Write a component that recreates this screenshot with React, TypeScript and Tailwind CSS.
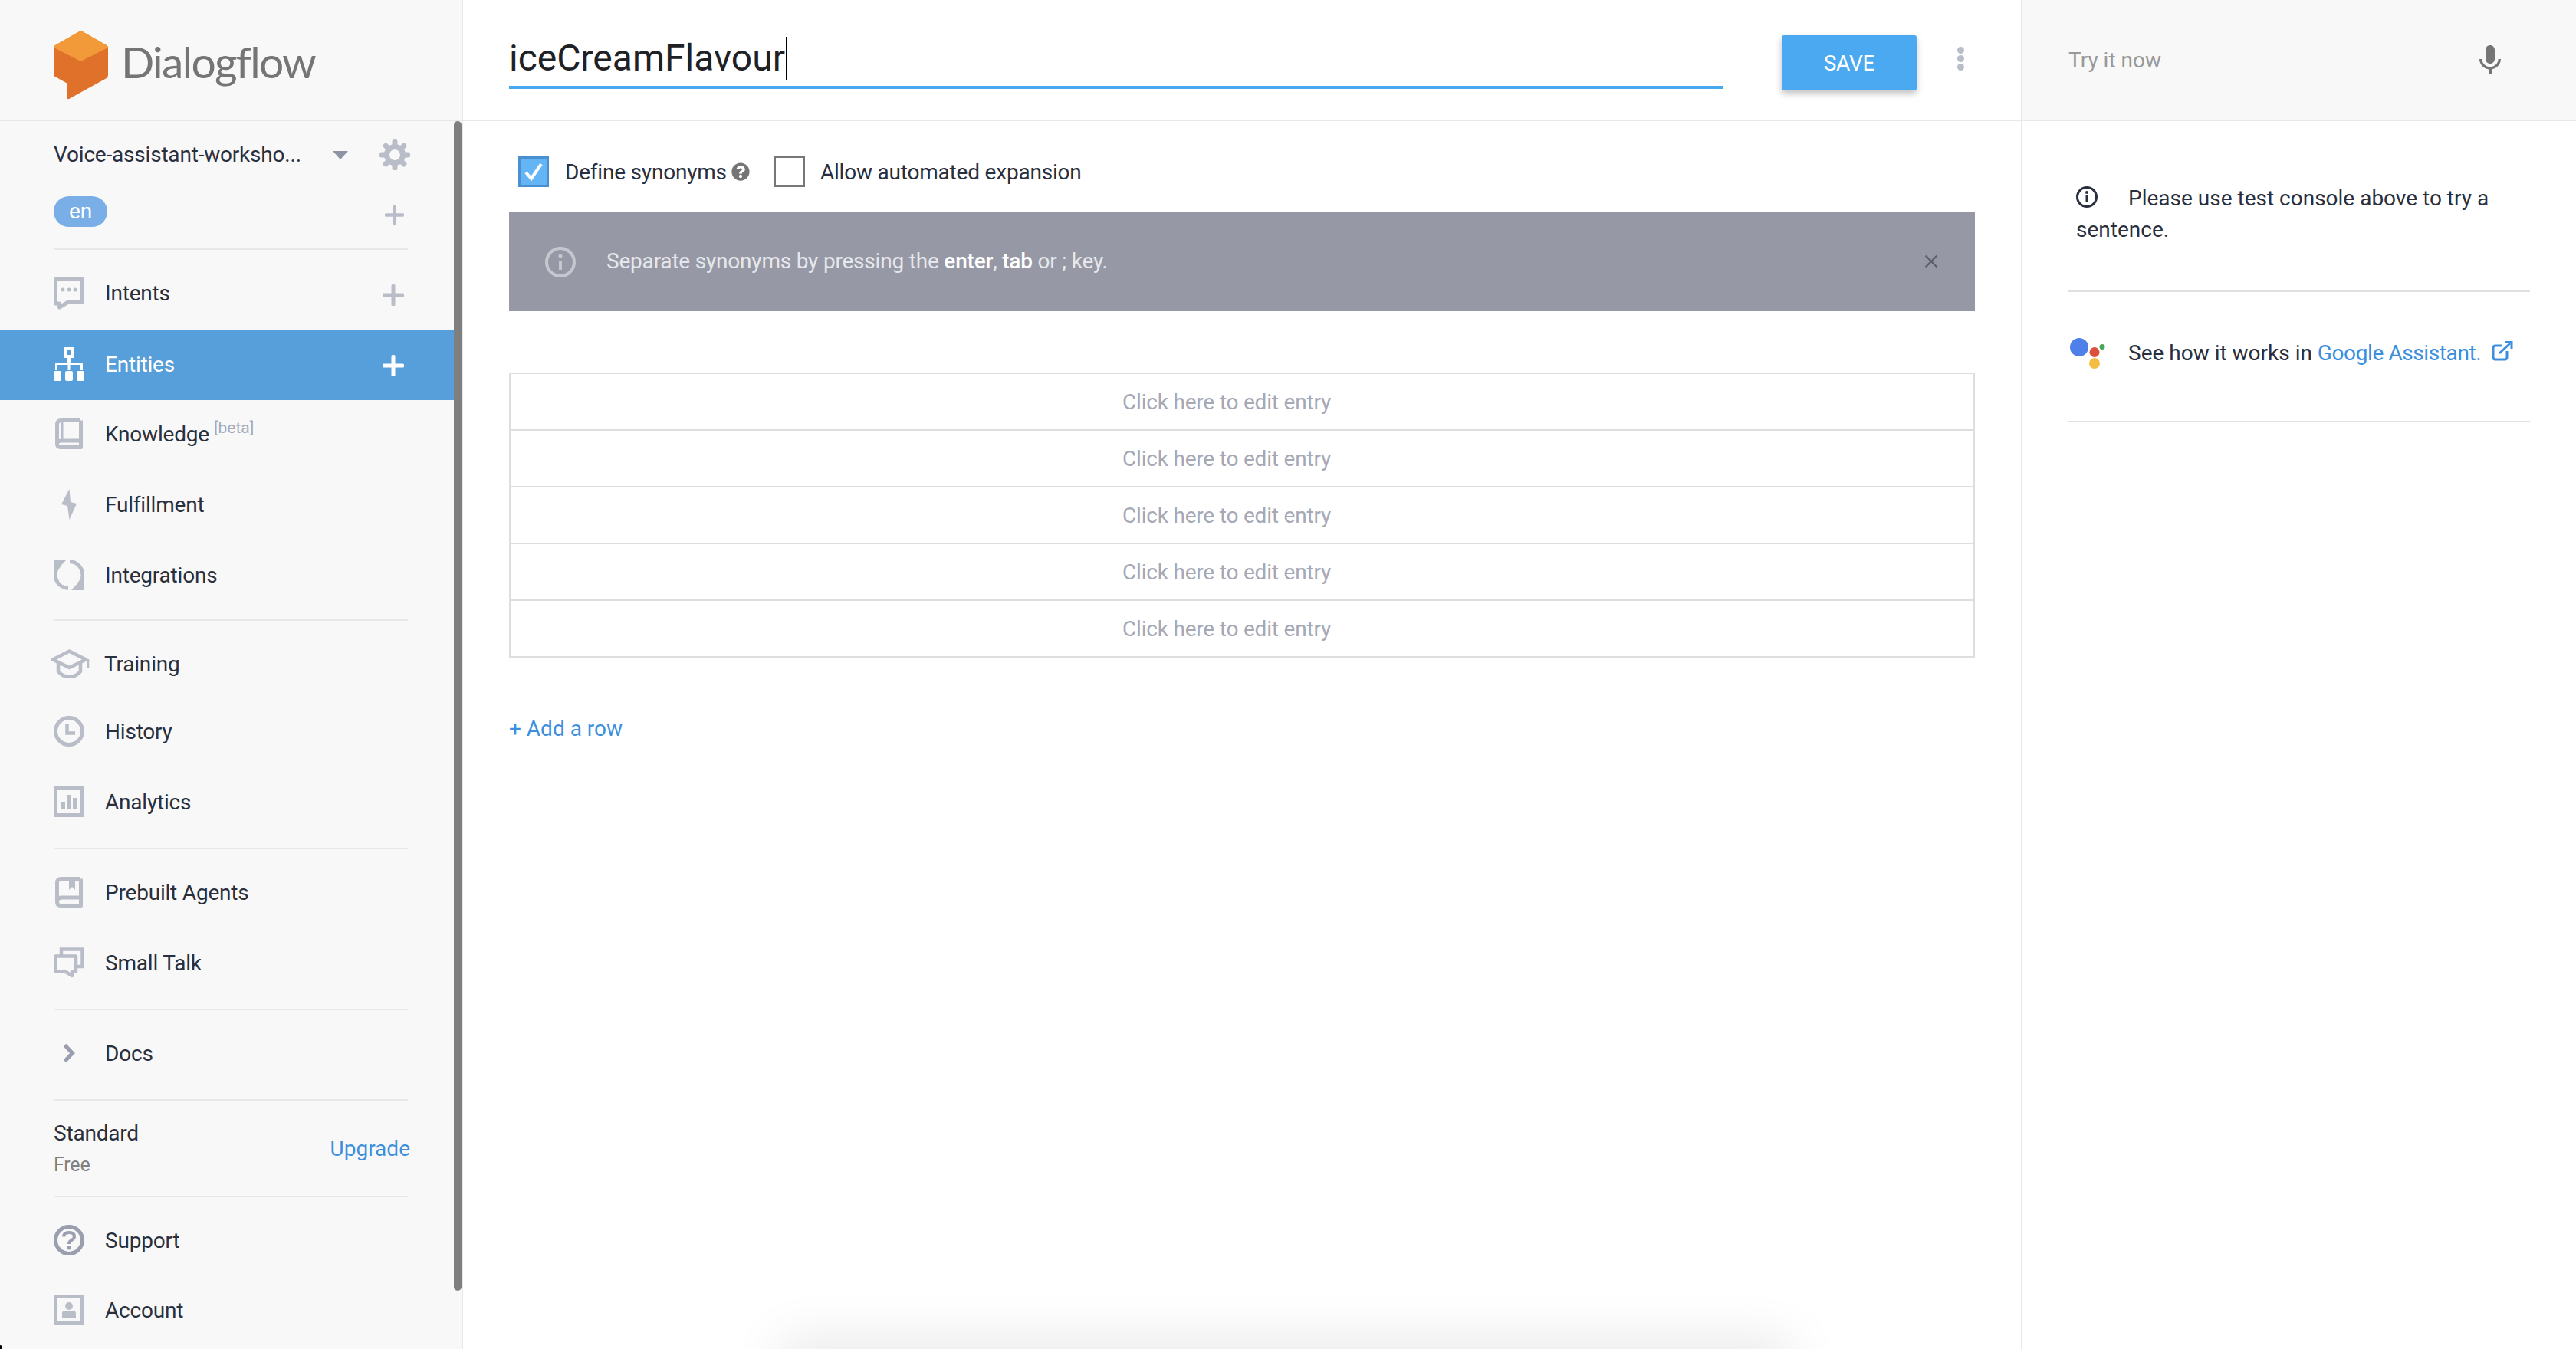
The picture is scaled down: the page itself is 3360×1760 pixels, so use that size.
import { MdClose, MdMic } from 'react-icons/md';
import { FaQuestionCircle } from 'react-icons/fa';

const ICON = '#b9bdc7';

function Plus({ size, color = ICON }: { size: number; color?: string }) {
  return (
    <svg width={size} height={size} viewBox="0 0 28 28" fill={color}>
      <rect x="11.5" y="0" width="5" height="28" rx="1.5" />
      <rect x="0" y="11.5" width="28" height="5" rx="1.5" />
    </svg>
  );
}

function Gear() {
  const teeth = [0, 45, 90, 135, 180, 225, 270, 315];
  return (
    <svg width="40" height="40" viewBox="0 0 40 40" className="shrink-0">
      {teeth.map((a) => (
        <rect key={a} x="16.5" y="0" width="7" height="10" rx="2.5" fill={ICON} transform={`rotate(${a} 20 20)`} />
      ))}
      <circle cx="20" cy="20" r="10.5" fill="none" stroke={ICON} strokeWidth="7" />
    </svg>
  );
}

function Logo() {
  return (
    <svg width="71" height="90" viewBox="0 0 71 90" className="shrink-0">
      <path d="M35.5 0 L69 19 Q71 20 71 23 L71 58 Q71 61 69 62 L20 89 Q18 90 18 88 L18 69 L2 60 Q0 59 0 56 L0 23 Q0 20 2 19 Z" fill="#e0712a" />
      <path d="M33.5 1 Q35.5 0 37.5 1 L69 19 Q71 20 71 22 L35.5 40 L0 22 Q0 20 2 19 Z" fill="#f29a39" />
    </svg>
  );
}

const NAV_ICONS: Record<string, React.ReactNode> = {
  intents: (
    <svg width="40" height="44" viewBox="0 0 40 44" fill="none" stroke={ICON} strokeWidth="5" className="shrink-0 mt-[4px]">
      <path d="M2.5 2.5 H37.5 V32 H19 L7.5 39 V34 H2.5 Z" strokeLinejoin="round" />
      <circle cx="12" cy="16" r="2.5" fill={ICON} stroke="none" />
      <circle cx="20" cy="16" r="2.5" fill={ICON} stroke="none" />
      <circle cx="28" cy="16" r="2.5" fill={ICON} stroke="none" />
    </svg>
  ),
  entities: (
    <svg width="40" height="44" viewBox="0 0 40 44" fill="#fff" className="shrink-0">
      <path fillRule="evenodd" d="M13 1 Q13 0 14 0 H26 Q27 0 27 1 V13 Q27 14 26 14 H23 V20 H36 Q38 20 38 22 V30 H35 V23 H21.5 V30 H18.5 V23 H5 V30 H2 V22 Q2 20 4 20 H17 V14 H14 Q13 14 13 13 Z M17 4 V10 H23 V4 Z" />
      <rect x="0" y="31" width="10" height="13" rx="2" />
      <rect x="15" y="31" width="10" height="13" rx="2" />
      <rect x="30" y="31" width="10" height="13" rx="2" />
    </svg>
  ),
  knowledge: (
    <svg width="36" height="40" viewBox="0 0 36 40" fill="none" stroke={ICON} strokeWidth="5" className="shrink-0">
      <path d="M33 2.5 H8 Q2.5 2.5 2.5 8 V33 Q2.5 37.5 7 37.5 H33.5 V2.5 M33 29 H8 Q2.5 29 2.5 33" strokeLinejoin="round" />
      <path d="M9 3 V28" strokeWidth="3" />
    </svg>
  ),
  fulfillment: (
    <svg width="20" height="40" viewBox="0 0 20 40" fill={ICON} className="shrink-0">
      <path d="M10.5 0 L0 20 L8 22 L10.5 40 L20 19 L12 17 Z" />
    </svg>
  ),
  integrations: (
    <svg width="40" height="40" viewBox="0 0 40 40" fill="none" stroke={ICON} strokeWidth="5" className="shrink-0">
      <path d="M19 37.5 A17.5 17.5 0 0 1 7 8" />
      <path d="M21 2.5 A17.5 17.5 0 0 1 33 32" />
      <path d="M0 0 H17 L1 17 Z" fill={ICON} stroke="none" />
      <path d="M40 40 H23 L39 23 Z" fill={ICON} stroke="none" />
    </svg>
  ),
  training: (
    <svg width="53" height="38" viewBox="0 0 53 38" fill="none" stroke={ICON} strokeWidth="4.5" className="shrink-0">
      <path d="M26.5 2.5 L48 13.5 L26.5 24 L5 13.5 Z" strokeLinejoin="round" />
      <path d="M12 18 V29 Q18 36 26.5 36 Q35 36 41 29 V18" />
      <path d="M51 13 V25" strokeWidth="2.5" />
    </svg>
  ),
  history: (
    <svg width="40" height="40" viewBox="0 0 40 40" fill="none" stroke={ICON} strokeWidth="5" className="shrink-0">
      <circle cx="20" cy="20" r="17.5" />
      <path d="M17.5 11 V22.5 H28" strokeWidth="4.5" />
    </svg>
  ),
  analytics: (
    <svg width="40" height="40" viewBox="0 0 40 40" fill={ICON} className="shrink-0">
      <path fillRule="evenodd" d="M1 0 H39 Q40 0 40 1 V39 Q40 40 39 40 H1 Q0 40 0 39 V1 Q0 0 1 0 Z M5 5 V35 H35 V5 Z" />
      <rect x="10" y="20" width="5" height="10" />
      <rect x="17.5" y="11" width="5" height="19" />
      <rect x="25" y="15" width="5" height="15" />
    </svg>
  ),
  prebuilt: (
    <svg width="36" height="40" viewBox="0 0 36 40" fill="none" stroke={ICON} strokeWidth="5" className="shrink-0">
      <path d="M33 2.5 H8 Q2.5 2.5 2.5 8 V33 Q2.5 37.5 7 37.5 H33.5 V2.5 M33 27 H8 Q2.5 27 2.5 33" strokeLinejoin="round" />
      <path d="M18 3 H26 V17 L22 13 L18 17 Z" fill={ICON} stroke="none" />
    </svg>
  ),
  smalltalk: (
    <svg width="40" height="40" viewBox="0 0 40 40" fill="none" stroke={ICON} strokeWidth="4.5" className="shrink-0">
      <path d="M10 10 V2.5 H37.5 V25 H29" />
      <path d="M2.5 11.5 H29 V31.5 H24 V37 L15 31.5 H2.5 Z" strokeLinejoin="round" />
    </svg>
  ),
  docs: (
    <svg width="16" height="26" viewBox="0 0 16 26" fill="none" stroke="#9a9eae" strokeWidth="5" className="shrink-0">
      <path d="M2.5 2.5 L12.5 13 L2.5 23.5" />
    </svg>
  ),
  support: (
    <svg width="40" height="40" viewBox="0 0 40 40" fill="none" stroke="#9a9eae" strokeWidth="5" className="shrink-0">
      <circle cx="20" cy="20" r="17.5" />
      <path d="M13 15.5 Q13 10 20 10 Q27 10 27 15 Q27 18 23.5 20 Q20 21.5 20 25" strokeWidth="4" />
      <circle cx="20" cy="30" r="2.5" fill="#9a9eae" stroke="none" />
    </svg>
  ),
  account: (
    <svg width="40" height="40" viewBox="0 0 40 40" fill={ICON} className="shrink-0">
      <path fillRule="evenodd" d="M1 0 H39 Q40 0 40 1 V39 Q40 40 39 40 H1 Q0 40 0 39 V1 Q0 0 1 0 Z M5 5 V35 H35 V5 Z" />
      <circle cx="20" cy="15" r="5" />
      <path d="M11 30 V25 Q11 21 15 21 H25 Q29 21 29 25 V30 Z" />
    </svg>
  ),
};

function NavRow({
  icon,
  label,
  height,
  active,
  plus,
  textClass = 'ml-[27px]',
  children,
}: {
  icon: string;
  label: string;
  height: string;
  active?: boolean;
  plus?: boolean;
  textClass?: string;
  children?: React.ReactNode;
}) {
  return (
    <div className={`flex items-center pl-[70px] pr-[65px] ${height} ${active ? 'bg-[#569fdb] text-white' : 'text-[#2a2f3d]'}`}>
      <div className="w-[40px] flex justify-center shrink-0">{NAV_ICONS[icon]}</div>
      <span className={`pt-[2px] ${textClass}`}>{label}</span>
      {children}
      {plus && (
        <div className="ml-auto mt-[5px]">
          <Plus size={28} color={active ? '#ffffff' : ICON} />
        </div>
      )}
    </div>
  );
}

function Divider() {
  return <div className="h-[2px] ml-[70px] w-[462px] bg-[#e8e8e8]" />;
}

function Sidebar() {
  return (
    <aside className="w-[604px] shrink-0 h-full bg-[#f8f8f8] border-r-2 border-[#e8e8e8] relative overflow-hidden">
      <div className="h-[158px] border-b-2 border-[#e8e8e8] pl-[70px] pt-[40px] flex items-start">
        <Logo />
        <span className="ml-[17px] mt-[4px] text-[57px] leading-[72px] tracking-[-1.7px] text-[#757575] [font-family:Lato,sans-serif]">Dialogflow</span>
      </div>

      <div className="absolute right-[0px] top-[158px] w-[10px] h-[1526px] rounded-[5px] bg-[#7f7f7f]" />
      <div className="absolute left-0 bottom-0 w-[3px] h-[5px] rounded-tr-[3px] bg-black" />

      <div className="h-[84px] flex items-center pl-[70px] pr-[67px] pt-[4px]">
        <span className="w-[364px] text-[#2a2f3d]">Voice-assistant-worksho...</span>
        <div className="w-0 h-0 border-x-[10px] border-x-transparent border-t-[11px] border-t-[#8e94a5]" />
        <div className="ml-[41px]">
          <Gear />
        </div>
      </div>
      <div className="h-[82px] flex items-start pl-[70px] pr-[75px] pt-[14px]">
        <div className="w-[70px] h-[40px] rounded-full bg-[#7aaee6] text-white flex items-center justify-center">en</div>
        <div className="ml-auto mt-[12px]">
          <Plus size={25} />
        </div>
      </div>
      <Divider />

      <div className="w-[592px]">
        <div className="mt-[10px]" />
        <NavRow icon="intents" label="Intents" height="h-[92px] mb-[2px]" plus />
        <NavRow icon="entities" label="Entities" height="h-[92px] pb-[3px]" active plus />
        <NavRow icon="knowledge" label="Knowledge" height="h-[88px] mb-[2px]">
          <span className="ml-[6px] -mt-[16px] text-[21px] leading-[24px] tracking-normal text-[#a5a9ba]">[beta]</span>
        </NavRow>
        <NavRow icon="fulfillment" label="Fulfillment" height="h-[92px]" />
        <NavRow icon="integrations" label="Integrations" height="h-[92px] mb-[12px]" />
        <Divider />
        <NavRow icon="training" label="Training" height="h-[92px] mt-[10px]" textClass="ml-[26px]" />
        <NavRow icon="history" label="History" height="h-[84px] mb-[4px]" />
        <NavRow icon="analytics" label="Analytics" height="h-[92px] mb-[14px]" />
        <Divider />
        <NavRow icon="prebuilt" label="Prebuilt Agents" height="h-[92px] mt-[10px]" />
        <NavRow icon="smalltalk" label="Small Talk" height="h-[92px] mb-[14px]" />
        <Divider />
        <NavRow icon="docs" label="Docs" height="h-[92px] mt-[10px] mb-[14px]" />
        <Divider />
        <div className="h-[124px] pl-[70px] pr-[57px] pt-[2px] flex items-center justify-between">
          <div className="flex flex-col">
            <span className="leading-[40px] text-[#2a2f3d]">Standard</span>
            <span className="mt-[1px] text-[25px] leading-[40px] text-[#808080]">Free</span>
          </div>
          <span className="tracking-normal text-[#3d8fde]">Upgrade</span>
        </div>
        <Divider />
        <NavRow icon="support" label="Support" height="h-[92px] mt-[10px]" />
        <NavRow icon="account" label="Account" height="h-[90px]" />
      </div>
    </aside>
  );
}

function EntryRow() {
  return (
    <div className="h-[74px] border-b-2 border-[#dedede] pr-[40px] pt-[1px] flex items-center justify-center text-[#a5a8b5]">
      Click here to edit entry
    </div>
  );
}

function Main() {
  return (
    <main className="flex-1 h-full flex flex-col relative overflow-hidden">
      <div className="h-[158px] shrink-0 border-b-2 border-[#e8e8e8] pl-[60px] flex items-start">
        <div className="w-[1584px] h-[116px] border-b-4 border-[#48a8ee] pt-[48px] flex items-start text-[48px] leading-[56px] tracking-normal text-[#202124]">
          <span>iceCreamFlavour</span>
          <span className="ml-[1px] w-[2px] h-[56px] bg-black" />
        </div>
        <button className="ml-[76px] mt-[46px] pt-[2px] w-[176px] h-[72px] rounded-[3px] bg-[#4aa9f0] text-white shadow-[0_4px_8px_rgba(0,0,0,0.25)]">SAVE</button>
        <div className="ml-[53px] mt-[61px] flex flex-col gap-[2px]">
          <div className="w-[9px] h-[9px] rounded-full bg-[#b9bdc7]" />
          <div className="w-[9px] h-[9px] rounded-full bg-[#b9bdc7]" />
          <div className="w-[9px] h-[9px] rounded-full bg-[#b9bdc7]" />
        </div>
      </div>

      <div className="px-[60px] pt-[46px] flex-1 flex flex-col">
        <div className="flex items-center h-[40px] pl-[12px] text-[#2a2f3d]">
          <div className="w-[40px] h-[40px] bg-[#64b5f6] border-[3px] border-[#4a90d0] flex items-center justify-center">
            <svg width="26" height="26" viewBox="0 0 26 26" fill="none" stroke="#fff" strokeWidth="4">
              <path d="M3 14 L10 22 L23 3" />
            </svg>
          </div>
          <span className="ml-[21px] pt-[1px]">Define synonyms</span>
          <FaQuestionCircle className="ml-[6px] text-[24px] text-[#757575]" />
          <div className="ml-[32px] w-[40px] h-[40px] border-2 border-[#777777]" />
          <span className="ml-[20px] pt-[1px]">Allow automated expansion</span>
        </div>

        <div className="mt-[32px] h-[130px] bg-[#9699a5] flex items-center pl-[47px] pr-[43px]">
          <svg width="40" height="40" viewBox="0 0 40 40" fill="none" stroke="#c5c7cf" strokeWidth="4" className="mt-[2px]">
            <circle cx="20" cy="20" r="18" />
            <circle cx="20" cy="12" r="2.5" fill="#c5c7cf" stroke="none" />
            <path d="M20 18 V30" />
          </svg>
          <span className="ml-[40px] text-[#e6e7eb]">
            Separate synonyms by pressing the <span className="font-medium text-white">enter</span>, <span className="font-medium text-white">tab</span> or ; key.
          </span>
          <MdClose className="ml-auto text-[28px] text-[#5c6070]" />
        </div>

        <div className="mt-[80px] border-t-2 border-x-2 border-[#dedede]">
          <EntryRow />
          <EntryRow />
          <EntryRow />
          <EntryRow />
          <EntryRow />
        </div>

        <div className="mt-[73px] leading-[40px] tracking-normal text-[#3d8fde]">+ Add a row</div>
      </div>

      <div className="absolute left-[416px] bottom-[-30px] w-[1315px] h-[30px] shadow-[0_0_70px_0_rgba(0,0,0,0.18)]" />
    </main>
  );
}

function TestPanel() {
  return (
    <section className="w-[724px] shrink-0 h-full border-l-2 border-[#e8e8e8] flex flex-col tracking-normal">
      <div className="h-[158px] border-b-2 border-[#e8e8e8] bg-[#f8f8f8] pl-[60px] pr-[88px] pt-[2px] flex items-center justify-between">
        <span className="text-[#999999]">Try it now</span>
        <MdMic className="text-[48px] text-[#757575]" />
      </div>
      <div className="px-[60px] pt-[80px]">
        <p className="pl-[10px] leading-[41px] text-[#2a2f3d] pb-[59px] border-b-2 border-[#e0e0e0]">
          <svg width="28" height="28" viewBox="0 0 28 28" fill="none" stroke="#2a2f3d" strokeWidth="3" className="inline-block mr-[40px] -mt-[8px]">
            <circle cx="14" cy="14" r="12.5" />
            <circle cx="14" cy="8" r="2" fill="#2a2f3d" stroke="none" />
            <path d="M14 12 V21" />
          </svg>
          Please use test console above to try a sentence.
        </p>
        <div className="flex items-center pt-[60px] pb-[68px] border-b-2 border-[#e0e0e0] h-[170px] text-[#2a2f3d]">
          <svg width="46" height="40" viewBox="0 0 46 40" className="shrink-0 ml-[2px]">
            <circle cx="12" cy="12" r="12" fill="#4f80ea" />
            <circle cx="32" cy="18.5" r="6.5" fill="#dd4f3c" />
            <circle cx="32" cy="33" r="7" fill="#f3bd41" />
            <circle cx="42" cy="11.5" r="3.5" fill="#4aa65a" />
          </svg>
          <span className="ml-[30px]">
            See how it works in <span className="tracking-[-0.4px] text-[#3d8fde]">Google Assistant.</span>
          </span>
          <svg width="28" height="26" viewBox="0 0 28 26" fill="none" stroke="#3d8fde" strokeWidth="3" className="ml-[14px] -mt-[6px]">
            <path d="M20 13 V21 Q20 24 17 24 H5 Q2 24 2 21 V9 Q2 6 5 6 H13" />
            <path d="M10 16 L24 3" />
            <path d="M17 1.5 H26 V10" />
          </svg>
        </div>
      </div>
    </section>
  );
}

export default function App() {
  return (
    <div className="w-[3360px] h-[1760px] flex overflow-hidden bg-white text-[28px] leading-[40px] tracking-[-0.2px] [font-family:Roboto,sans-serif]">
      <Sidebar />
      <Main />
      <TestPanel />
    </div>
  );
}
